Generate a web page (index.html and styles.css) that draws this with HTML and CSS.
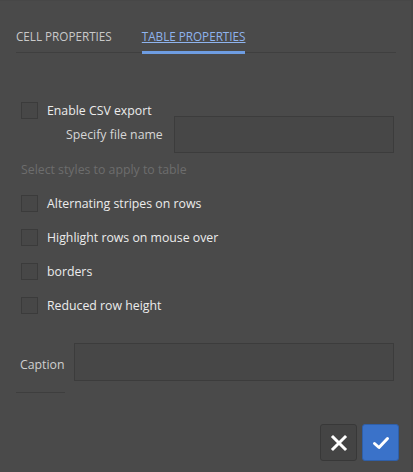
FILE: index.html
```html
<!DOCTYPE html>
<html>
<head>
<meta charset="utf-8">
<link rel="stylesheet" href="styles.css">
</head>
<body>
<div class="dialog">
  <div class="tabs">
    <div class="tab">CELL PROPERTIES</div>
    <div class="tab active">TABLE PROPERTIES</div>
  </div>
  <div class="panel">
    <label class="check-row first">
      <span class="box"></span>
      <span class="label strong">Enable CSV export</span>
    </label>
    <div class="file-row">
      <span class="field-label">Specify file name</span>
      <span class="input file-input"></span>
    </div>
    <div class="hint">Select styles to apply to table</div>
    <label class="check-row style-row">
      <span class="box"></span>
      <span class="label">Alternating stripes on rows</span>
    </label>
    <label class="check-row style-row">
      <span class="box"></span>
      <span class="label">Highlight rows on mouse over</span>
    </label>
    <label class="check-row style-row">
      <span class="box"></span>
      <span class="label">borders</span>
    </label>
    <label class="check-row style-row">
      <span class="box"></span>
      <span class="label">Reduced row height</span>
    </label>
    <div class="caption-row">
      <span class="caption-label">Caption</span>
      <span class="input caption-input"></span>
    </div>
    <div class="caption-rule"></div>
  </div>
  <div class="footer">
    <button class="btn cancel" aria-label="Cancel">
      <svg width="18" height="18" viewBox="0 0 18 18"><path d="M3 3 L15 15 M15 3 L3 15" stroke="#ffffff" stroke-width="3" stroke-linecap="square" fill="none"/></svg>
    </button>
    <button class="btn ok" aria-label="OK">
      <svg width="18" height="18" viewBox="0 0 18 18"><path d="M2.5 9.5 L7 13.5 L15.5 4.5" stroke="#ffffff" stroke-width="3" stroke-linecap="round" stroke-linejoin="round" fill="none"/></svg>
    </button>
  </div>
</div>
</body>
</html>
```

FILE: styles.css
```css
html, body {
  margin: 0;
  padding: 0;
  background: #4a4a4a;
}
body {
  font-family: "Open Sans", "Liberation Sans", sans-serif;
  font-size: 12.3px;
  color: #e6e6e6;
  width: 413px;
  height: 472px;
  overflow: hidden;
}
.dialog {
  height: 472px;
  box-sizing: border-box;
  border-right: 2px solid #464646;
  border-top: 1px solid #474747;
}
.tabs {
  display: flex;
  gap: 30px;
  height: 51px;
  margin: 0 15px 0 16px;
  border-bottom: 1px solid #3f3f3f;
  align-items: flex-end;
}
.tab {
  font-size: 11.7px;
  line-height: 18px;
  padding-bottom: 6px;
  border-bottom: 3px solid transparent;
  margin-bottom: -2px;
  color: #c9c9c9;
}
.tab.active {
  color: #8fb4ee;
  text-decoration: underline;
  border-bottom-color: #6e9de2;
}
.panel {
  padding: 0 17px 0 21px;
}
.check-row {
  display: flex;
  align-items: center;
  height: 17px;
}
.check-row.first {
  margin-top: 49px;
}
.box {
  width: 15px;
  height: 15px;
  border: 1px solid #3b3b3b;
  background: #474747;
  flex: none;
}
.label {
  margin-left: 9px;
  color: #ececec;
  line-height: 17px;
}
.file-row {
  display: flex;
  align-items: center;
  margin-top: -3px;
  height: 37px;
}
.field-label {
  margin-left: 45px;
  width: 108px;
  color: #d6d6d6;
}
.input {
  display: block;
  box-sizing: border-box;
  border: 1px solid #3c3c3c;
  background: #474747;
}
.file-input {
  flex: 1;
  height: 37px;
}
.hint {
  margin-top: 8px;
  color: #6d6d6d;
  line-height: 18px;
}
.style-row {
  margin-top: 17px;
}
.hint + .style-row {
  margin-top: 16px;
}
.caption-row {
  display: flex;
  align-items: center;
  margin-top: 29px;
  margin-left: -1px;
  height: 38px;
}
.caption-label {
  width: 54px;
  padding-top: 5px;
  color: #cfcfcf;
}
.caption-input {
  flex: 1;
  height: 38px;
}
.caption-rule {
  margin: 11px 0 0 -5px;
  width: 49px;
  height: 1px;
  background: #3e3e3e;
}
.footer {
  display: flex;
  justify-content: flex-end;
  gap: 5px;
  padding: 31px 12px 0 0;
}
.btn {
  width: 37px;
  height: 37px;
  box-sizing: border-box;
  border-radius: 3px;
  display: flex;
  align-items: center;
  justify-content: center;
  padding: 0;
}
.btn.cancel {
  background: #444444;
  border: 1px solid #383838;
}
.btn.ok {
  background: #3a72c9;
  border: 1px solid #2f5fa8;
}
```
